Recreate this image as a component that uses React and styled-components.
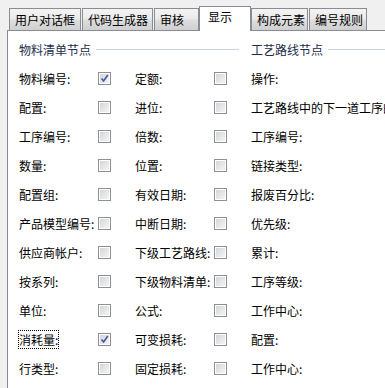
import React from 'react';
import styled, { createGlobalStyle } from 'styled-components';

const GlobalStyle = createGlobalStyle`
    body {
        margin: 0;
        background: #f0f0f0;
        font-family: "Noto Sans CJK SC", "Liberation Sans", sans-serif;
        font-size: 12px;
        color: #000;
    }
`

const Window = styled.div`
    width: 385px;
    height: 388px;
    overflow: hidden;
    background: #f0f0f0;
    padding-left: 7px;
    box-sizing: border-box;
`

const TabStrip = styled.div`
    display: flex;
    align-items: flex-end;
    gap: 1px;
    height: 30px;
    padding-left: 2px;
    position: relative;
    z-index: 1;
`

const Tab = styled.div`
    box-sizing: border-box;
    width: ${p => p.w}px;
    height: ${p => p.active ? 25 : 22}px;
    padding: ${p => p.active ? '3px 0 0 8px' : '4px 0 0 5px'};
    margin: ${p => p.active ? '0 -1px -1px -1px' : '0'};
    line-height: 14px;
    border: 1px solid #898c95;
    border-bottom: none;
    background: ${p => p.active ? '#fff' : 'linear-gradient(#f3f3f3, #ebebeb 45%, #dddddd 55%, #cfcfcf)'};
    white-space: nowrap;
`

const Panel = styled.div`
    background: #fff;
    border-left: 1px solid #898c95;
    border-top: 1px solid #898c95;
    height: 358px;
    display: flex;
    padding: 9px 0 0 11px;
    box-sizing: border-box;
    overflow: hidden;
`

const Group = styled.div`
    width: ${p => p.w ? `${p.w}px` : 'auto'};
    flex: ${p => p.w ? 'none' : 1};
    margin-right: ${p => p.w ? 12 : 0}px;
    white-space: nowrap;
`

const GroupHeader = styled.div`
    display: flex;
    align-items: center;
    height: 18px;
    margin-bottom: 6px;
    color: #1e2d4a;

    &::after {
        content: '';
        flex: 1;
        height: 1px;
        margin-left: 5px;
        background: #c4d5e8;
    }
`

const Grid = styled.div`
    display: grid;
    grid-template-columns: ${p => p.cols};
    grid-auto-rows: 29px;
    align-items: center;
`

const Label = styled.span`
    line-height: 17px;
    white-space: nowrap;
    justify-self: start;
    ${p => p.focus && `
        outline: 1px dotted #000;
        outline-offset: 0px;
    `}
`

const Box = styled.span`
    box-sizing: border-box;
    width: 13px;
    height: 13px;
    border: 1px solid #8e8f8f;
    background: #fff;
    padding: 1px;
    display: flex;

    &::before {
        content: '';
        flex: 1;
        background: linear-gradient(135deg, #d3d6db, #f4f4f4);
    }
`

const Check = styled.svg`
    position: absolute;
`

const BoxWrap = styled.span`
    position: relative;
    width: 13px;
    height: 13px;
    display: flex;
    align-items: center;
    justify-content: center;
`

const Checkbox = ({ checked }) => (
    <BoxWrap>
        <Box />
        {checked &&
            <Check width="9" height="9" viewBox="0 0 9 9">
                <path d="M1.5 4.5 L3.6 7 L7.8 1" fill="none" stroke="#3e5a9a" strokeWidth="1.6" />
            </Check>}
    </BoxWrap>
)

const tabs = [
    { name: '用户对话框', w: 72 },
    { name: '代码生成器', w: 71 },
    { name: '审核', w: 45 },
    { name: '显示', w: 52, active: true },
    { name: '构成元素', w: 57 },
    { name: '编号规则', w: 58 },
]

const bomRows = [
    ['物料编号:', true, '定额:', false],
    ['配置:', false, '进位:', false],
    ['工序编号:', false, '倍数:', false],
    ['数量:', false, '位置:', false],
    ['配置组:', false, '有效日期:', false],
    ['产品模型编号:', false, '中断日期:', false],
    ['供应商帐户:', false, '下级工艺路线:', false],
    ['按系列:', false, '下级物料清单:', false],
    ['单位:', false, '公式:', false],
    ['消耗量:', true, '可变损耗:', false, true],
    ['行类型:', false, '固定损耗:', false],
]

const routeRows = [
    '操作:', '工艺路线中的下一道工序的:', '工序编号:', '链接类型:', '报废百分比:',
    '优先级:', '累计:', '工序等级:', '工作中心:', '配置:', '工作中心:',
]

export default function App() {
    return (
        <Window>
            <GlobalStyle />
            <TabStrip>
                {tabs.map(t => (
                    <Tab key={t.name} w={t.w} active={t.active}>{t.name}</Tab>
                ))}
            </TabStrip>
            <Panel>
                <Group w={220}>
                    <GroupHeader>物料清单节点</GroupHeader>
                    <Grid cols="79px 37px 79px 13px">
                        {bomRows.map(([a, ca, b, cb, focus]) => (
                            <React.Fragment key={a}>
                                <Label focus={focus}>{a}</Label>
                                <Checkbox checked={ca} />
                                <Label>{b}</Label>
                                <Checkbox checked={cb} />
                            </React.Fragment>
                        ))}
                    </Grid>
                </Group>
                <Group>
                    <GroupHeader>工艺路线节点</GroupHeader>
                    <Grid cols="1fr">
                        {routeRows.map((r, i) => <Label key={i}>{r}</Label>)}
                    </Grid>
                </Group>
            </Panel>
        </Window>
    );
}
